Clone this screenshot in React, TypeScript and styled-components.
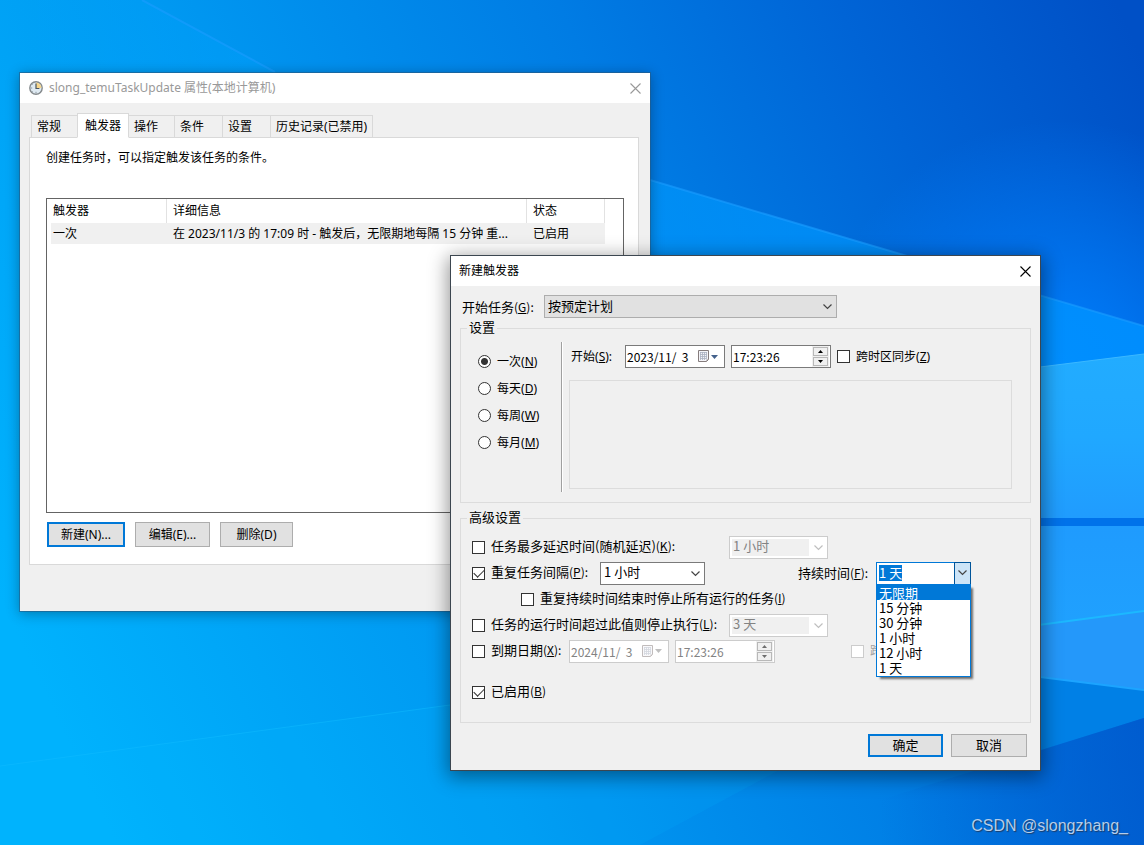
import React, { useEffect, useRef } from "react";
import styled, { createGlobalStyle, css } from "styled-components";

const wideFont = `"Noto Sans", "Noto Sans CJK SC", sans-serif`;
const narrowFont = `"Noto Sans CJK SC", sans-serif`;

const GlobalStyle = createGlobalStyle`
  * { box-sizing: border-box; }
  body { margin: 0; font: 12px/18px ${wideFont}; color: #000; }
  button, input, select { font: inherit; color: inherit; margin: 0; border-radius: 0; }
  u { text-underline-offset: 1px; text-decoration-thickness: 1px; }
`;

/* ---------- desktop ---------- */

const Desktop = styled.main`
  position: relative;
  min-height: 100vh;
  overflow: hidden;
  background: #0094f0;
`;

const Backdrop = styled.svg`
  position: absolute;
  inset: 0;
  width: 100%;
  height: 100%;
`;

const Watermark = styled.span`
  position: absolute;
  right: 16px;
  bottom: 9px;
  font: 16px/20px "Liberation Sans", sans-serif;
  color: #b4cdea;
  text-shadow: 1px 1px 1px #1c3d66;
`;

const Wallpaper = () => (
  <Backdrop viewBox="0 0 1144 845" preserveAspectRatio="none" aria-hidden="true">
    <defs>
      <linearGradient id="base" gradientUnits="userSpaceOnUse" x1="0" y1="600" x2="1144" y2="60">
        <stop offset="0" stopColor="#00b2fd" />
        <stop offset="0.3" stopColor="#009af2" />
        <stop offset="0.6" stopColor="#007ce4" />
        <stop offset="0.8" stopColor="#0064d6" />
        <stop offset="1" stopColor="#0050c6" />
      </linearGradient>
      <radialGradient id="glow" gradientUnits="userSpaceOnUse" cx="1060" cy="360" r="240">
        <stop offset="0" stopColor="#0080ff" stopOpacity="0.95" />
        <stop offset="1" stopColor="#0080ff" stopOpacity="0" />
      </radialGradient>
      <linearGradient id="beam" gradientUnits="userSpaceOnUse" x1="0" y1="0" x2="1144" y2="0">
        <stop offset="0" stopColor="#00a4ff" stopOpacity="0" />
        <stop offset="0.2" stopColor="#00a4ff" stopOpacity="0.3" />
        <stop offset="1" stopColor="#0090ff" stopOpacity="0.9" />
      </linearGradient>
      <linearGradient id="shade" gradientUnits="userSpaceOnUse" x1="880" y1="0" x2="1144" y2="0">
        <stop offset="0" stopColor="#0058cc" stopOpacity="0" />
        <stop offset="1" stopColor="#0058cc" stopOpacity="0.7" />
      </linearGradient>
      <linearGradient id="paneTop" x1="0" y1="0" x2="0" y2="1">
        <stop offset="0" stopColor="#22acff" />
        <stop offset="0.5" stopColor="#20a8ff" />
        <stop offset="1" stopColor="#209cfe" />
      </linearGradient>
      <linearGradient id="paneBottom" x1="0" y1="0" x2="0" y2="1">
        <stop offset="0" stopColor="#1f9bfe" />
        <stop offset="1" stopColor="#20a4fe" />
      </linearGradient>
    </defs>
    <rect width="1144" height="845" fill="url(#base)" />
    <rect width="1144" height="600" fill="url(#glow)" />
    <path d="M0 0H142L275 72L650 180L1144 326V480H0Z" fill="url(#beam)" />
    <path d="M142 0L275 72M650 180L1144 326" stroke="#1a9cff" strokeWidth="2" opacity="0.6" fill="none" />
    <path d="M0 766L450 705H900L640 845H0Z" fill="#00c0ff" opacity="0.12" />
    <path d="M0 766L450 705" stroke="#10bcff" strokeWidth="1" opacity="0.5" />
    <path d="M1000 372L1144 354V518H1000Z" fill="url(#paneTop)" />
    <path d="M1000 372L1144 354" stroke="#3cb8ff" strokeWidth="1" />
    <path d="M1000 518H1144V526H1000Z" fill="#0072ea" />
    <path d="M1000 526H1144V690L1000 672Z" fill="url(#paneBottom)" />
    <path d="M1000 630L1144 611V690L1000 672Z" fill="#2498fa" />
    <path d="M1000 630L1144 611" stroke="#1cb8ff" strokeWidth="2" />
    <path d="M1000 672L1144 690V718L1000 763Z" fill="#0080e6" />
    <path d="M1000 672L1144 690" stroke="#1ca4ff" strokeWidth="2" />
    <path d="M880 800L1144 718V845H880Z" fill="url(#shade)" />
  </Backdrop>
);

/* ---------- window frame ---------- */

const Window = styled.section<{ $x: number; $y: number; $w: number; $active?: boolean }>`
  position: absolute;
  left: ${(p) => p.$x}px;
  top: ${(p) => p.$y}px;
  width: min(${(p) => p.$w}px, calc(100vw - 40px));
  background: #f0f0f0;
  ${(p) =>
    p.$active
      ? css`
          border: 1px solid #3c4650;
          box-shadow: 0 4px 18px 2px rgba(0, 0, 0, 0.42);
        `
      : css`
          box-shadow: 0 0 0 1px rgba(40, 90, 130, 0.6), 0 2px 12px 1px rgba(0, 0, 0, 0.3);
        `}
`;

const TitleBar = styled.header<{ $muted?: boolean }>`
  display: flex;
  align-items: center;
  height: 30px;
  background: #fff;
  color: ${(p) => (p.$muted ? "#999" : "#000")};
`;

const TitleIcon = styled.svg`
  width: 14px;
  height: 14px;
  margin: 0 6px 0 9px;
`;

const TitleText = styled.h1<{ $inset?: boolean }>`
  flex: 1;
  margin: 0;
  padding-left: ${(p) => (p.$inset ? 8 : 0)}px;
  font: inherit;
`;

const CloseButton = styled.button`
  display: grid;
  place-items: center;
  width: 30px;
  height: 28px;
  padding: 0;
  border: 0;
  background: none;
`;

const CloseGlyph = () => (
  <svg width="11" height="11" viewBox="0 0 11 11" stroke="currentColor" strokeWidth="1.1" aria-hidden="true">
    <path d="M0.5 0.5L10.5 10.5M10.5 0.5L0.5 10.5" />
  </svg>
);

const ClockGlyph = () => (
  <TitleIcon viewBox="0 0 14 14" aria-hidden="true">
    <circle cx="7" cy="7" r="6.2" fill="#dfeaf2" stroke="#84898c" strokeWidth="1.4" />
    <path d="M7 7V1.6A5.4 5.4 0 0 1 12.4 7Z" fill="#f7d68c" />
    <path d="M7 2.6V7.5H10.4" fill="none" stroke="#4a5560" strokeWidth="1.2" />
    <path d="M2 7H3.2M7 12V10.8M3.4 3.4L4 4M3.4 10.6L4 10" stroke="#7d8a94" strokeWidth="0.9" />
  </TitleIcon>
);

const PushButton = styled.button<{ $w: number; $primary?: boolean; $tall?: boolean }>`
  width: ${(p) => p.$w}px;
  height: ${(p) => (p.$tall ? 25 : 23)}px;
  padding: 0 0 ${(p) => (p.$tall ? 0 : 2)}px;
  line-height: 18px;
  border: ${(p) => (p.$primary ? "2px solid #0078d7" : "1px solid #adadad")};
  background: #e1e1e1;
`;

/* ---------- properties window ---------- */

const PropsBody = styled.div`
  padding: 10px 11px 46px 9px;
`;

const Tabs = styled.nav`
  display: grid;
  grid-template-columns: 46px 52px 45px 48px 48px 103px;
  align-items: end;
  height: 25px;
  margin: 0 0 -1px 2px;
`;

const Tab = styled.button<{ $selected?: boolean }>`
  position: relative;
  height: 23px;
  padding: 0 0 0 5px;
  border: 1px solid #d9d9d9;
  border-right-width: 0;
  background: #f0f0f0;
  text-align: left;
  white-space: nowrap;
  &:last-child { border-right-width: 1px; }
  ${(p) =>
    p.$selected &&
    css`
      height: 25px;
      padding-left: 7px;
      border-right-width: 1px;
      border-bottom-color: #fff;
      background: #fff;
      & + button { border-left: 0; }
    `}
`;

const TabPanel = styled.div`
  padding: 11px 14px 17px 16px;
  border: 1px solid #d9d9d9;
  background: #fff;
`;

const Hint = styled.p`
  margin: 0 0 31px;
`;

const ListBox = styled.div`
  height: 315px;
  border: 1px solid #646464;
  overflow: hidden;
`;

const TriggerTable = styled.table`
  width: 558px;
  table-layout: fixed;
  border-collapse: separate;
  border-spacing: 0;
  text-align: left;
  white-space: nowrap;
  th, td { padding: 0 0 0 6px; font-weight: normal; overflow: hidden; }
  th { height: 24px; border-right: 1px solid #e2e2e2; }
  td { height: 21px; background: #f0f0f0; }
  td:first-child { background: linear-gradient(to right, #fff 4px, #f0f0f0 4px); }
`;

const ButtonRow = styled.div<{ $end?: boolean }>`
  display: flex;
  justify-content: ${(p) => (p.$end ? "flex-end" : "flex-start")};
  gap: ${(p) => (p.$end ? 8 : 10)}px;
  margin: ${(p) => (p.$end ? "11px 4px 0 0" : "9px 0 0 1px")};
`;

const PropertiesWindow = () => (
  <Window $x={20} $y={73} $w={630}>
    <TitleBar $muted>
      <ClockGlyph />
      <TitleText>slong_temuTaskUpdate 属性(本地计算机)</TitleText>
      <CloseButton aria-label="关闭">
        <CloseGlyph />
      </CloseButton>
    </TitleBar>
    <PropsBody>
      <Tabs>
        <Tab>常规</Tab>
        <Tab $selected>触发器</Tab>
        <Tab>操作</Tab>
        <Tab>条件</Tab>
        <Tab>设置</Tab>
        <Tab>历史记录(已禁用)</Tab>
      </Tabs>
      <TabPanel>
        <Hint>创建任务时，可以指定触发该任务的条件。</Hint>
        <ListBox>
          <TriggerTable>
            <colgroup>
              <col style={{ width: 120 }} />
              <col style={{ width: 360 }} />
              <col />
            </colgroup>
            <thead>
              <tr>
                <th>触发器</th>
                <th>详细信息</th>
                <th>状态</th>
              </tr>
            </thead>
            <tbody>
              <tr>
                <td>一次</td>
                <td>在 2023/11/3 的 17:09 时 - 触发后，无限期地每隔 15 分钟 重...</td>
                <td>已启用</td>
              </tr>
            </tbody>
          </TriggerTable>
        </ListBox>
        <ButtonRow>
          <PushButton $w={78} $tall $primary>新建(N)...</PushButton>
          <PushButton $w={75} $tall>编辑(E)...</PushButton>
          <PushButton $w={73} $tall>删除(D)</PushButton>
        </ButtonRow>
      </TabPanel>
    </PropsBody>
  </Window>
);

/* ---------- form parts ---------- */

const KeyHint = styled.span`
  font-size: 12px;
`;

const Mnemonic = ({ k, colon }: { k: string; colon?: boolean }) => (
  <KeyHint>
    (<u>{k}</u>){colon && ":"}
  </KeyHint>
);

const Check = styled.label<{ $w?: number; $indent?: number; $disabled?: boolean; $small?: boolean }>`
  display: flex;
  align-items: center;
  gap: 6px;
  flex: none;
  width: ${(p) => (p.$w ? `${p.$w}px` : "auto")};
  margin-left: ${(p) => p.$indent ?? 0}px;
  white-space: nowrap;
  color: ${(p) => (p.$disabled ? "#a0a0a0" : "#000")};
  > span { padding-bottom: ${(p) => (p.$small ? 0 : 2)}px; }
  ${(p) => p.$small && `font: 12px/18px ${wideFont};`}
`;

const TickBox = styled.input.attrs({ type: "checkbox" })`
  appearance: none;
  display: grid;
  place-items: center;
  width: 13px;
  height: 13px;
  border: 1px solid #333;
  background: #fff;
  &:disabled { border-color: #ccc; }
  &:checked::after {
    content: "";
    width: 9px;
    height: 5px;
    margin-bottom: 3px;
    border: solid #333;
    border-width: 0 0 1px 1px;
    transform: rotate(-45deg);
  }
`;

const RadioLabel = styled.label`
  display: flex;
  align-items: center;
  gap: 6px;
  height: 27px;
  white-space: nowrap;
`;

const RadioDot = styled.input.attrs({ type: "radio" })`
  appearance: none;
  width: 13px;
  height: 13px;
  border: 1px solid #333;
  border-radius: 50%;
  background: #fff;
  &:checked { background: radial-gradient(circle, #333 3px, #fff 4px); }
`;

const ComboFrame = styled.div<{ $w: number; $tone?: "gray" | "disabled" }>`
  position: relative;
  flex: 0 1 ${(p) => p.$w}px;
  height: 23px;
  border: 1px solid #7a7a7a;
  background: #fff;
  ${(p) => p.$tone === "gray" && "border-color: #adadad; background: #e1e1e1;"}
  ${(p) => p.$tone === "disabled" && "border-color: #ccc; color: #838383;"}
`;

const ComboSelect = styled.select`
  appearance: none;
  display: block;
  width: 100%;
  height: 21px;
  padding: 0 20px 2px 3px;
  border: 0;
  background: none;
  &:disabled {
    opacity: 1;
    background: linear-gradient(#f0f0f0, #f0f0f0) 2px 2px / calc(100% - 20px) 17px no-repeat;
  }
`;

const ComboArrow = styled.svg`
  position: absolute;
  right: 4px;
  top: 8px;
  pointer-events: none;
`;

const ArrowPath = () => <path d="M0.5 0.5L4.5 4.5L8.5 0.5" fill="none" stroke="currentColor" strokeWidth="1.2" />;

const Combo = ({ id, w, value, tone }: { id: string; w: number; value: string; tone?: "gray" | "disabled" }) => (
  <ComboFrame $w={w} $tone={tone}>
    <ComboSelect id={id} aria-label={value} disabled={tone === "disabled"} defaultValue={value}>
      <option>{value}</option>
    </ComboSelect>
    <ComboArrow width="9" height="6" viewBox="0 0 9 6" color={tone === "disabled" ? "#bfbfbf" : "#444"}>
      <ArrowPath />
    </ComboArrow>
  </ComboFrame>
);

const Field = styled.div<{ $disabled?: boolean }>`
  display: flex;
  align-items: center;
  flex: 0 1 100px;
  min-width: 0;
  height: 23px;
  border: 1px solid ${(p) => (p.$disabled ? "#ccc" : "#7a7a7a")};
  background: #fff;
  color: ${(p) => (p.$disabled ? "#838383" : "#000")};
  font: 12px/18px ${narrowFont};
`;

const FieldInput = styled.input`
  flex: 1;
  min-width: 0;
  height: 19px;
  padding: 0 0 0 1px;
  border: 0;
  background: none;
  white-space: pre;
`;

const PickerButton = styled.button`
  display: flex;
  align-items: center;
  gap: 1px;
  padding: 0 6px 0 0;
  border: 0;
  background: none;
`;

const Spinner = styled.span`
  display: grid;
  gap: 1px;
  padding: 1px;
  margin-right: 1px;
  background: #f0f0f0;
`;

const SpinButton = styled.button`
  display: grid;
  place-items: center;
  width: 15px;
  height: 9px;
  padding: 0;
  border: 1px solid #b8b8b8;
  background: #f0f0f0;
`;

const DateField = ({ label, value, disabled }: { label: string; value: string; disabled?: boolean }) => (
  <Field $disabled={disabled}>
    <FieldInput aria-label={label} defaultValue={value} disabled={disabled} />
    <PickerButton type="button" aria-label="选择日期" disabled={disabled}>
      <svg width="12" height="13" viewBox="0 0 12 13" opacity={disabled ? 0.5 : 1}>
        <path d="M0.5 0.5H10.5V9.5L8.5 11.5H0.5Z" fill="#f4f4f8" stroke="#857c7c" />
        <path d="M2 2.5H9M2 4.5H9M2 6.5H9M2 8.5H8M2.5 2V10M4.5 2V10M6.5 2V10M8.5 2V9" stroke="#a9b0bf" strokeWidth="0.8" />
        <path d="M10.5 9.5H8.5V11.5Z" fill="#857c7c" />
      </svg>
      <svg width="7" height="4" viewBox="0 0 7 4">
        <path d="M0 0H7L3.5 4Z" fill={disabled ? "#bfbfbf" : "#44628c"} />
      </svg>
    </PickerButton>
  </Field>
);

const TimeField = ({ label, value, disabled }: { label: string; value: string; disabled?: boolean }) => (
  <Field $disabled={disabled}>
    <FieldInput aria-label={label} defaultValue={value} disabled={disabled} />
    <Spinner>
      <SpinButton type="button" aria-label="增加" disabled={disabled}>
        <svg width="5" height="3" viewBox="0 0 5 3">
          <path d="M0 3H5L2.5 0Z" fill={disabled ? "#6d6d6d" : "#000"} />
        </svg>
      </SpinButton>
      <SpinButton type="button" aria-label="减少" disabled={disabled}>
        <svg width="5" height="3" viewBox="0 0 5 3">
          <path d="M0 0H5L2.5 3Z" fill={disabled ? "#6d6d6d" : "#000"} />
        </svg>
      </SpinButton>
    </Spinner>
  </Field>
);

/* ---------- duration combo box with its open list ---------- */

const DurationBox = styled.div`
  position: relative;
  display: flex;
  width: 95px;
  height: 23px;
  border: 1px solid #0078d7;
  background: #fff;
`;

const DurationInput = styled.input`
  flex: 1;
  min-width: 0;
  height: 16px;
  margin: 2px 0 0 2px;
  padding: 0;
  border: 0;
  outline: 0;
  line-height: 16px;
  &::selection { background: #0078d7; color: #fff; }
`;

const DropButton = styled.button`
  display: grid;
  place-items: center;
  width: 17px;
  margin: -1px;
  padding: 0;
  border: 1px solid #005499;
  background: #cce4f7;
  color: #444;
`;

const OptionList = styled.ul`
  position: absolute;
  z-index: 2;
  top: 21px;
  left: -1px;
  right: -1px;
  margin: 0;
  padding: 0 0 1px;
  border: 1px solid #0078d7;
  background: #fff;
  box-shadow: 3px 3px 2px -1px rgba(0, 0, 0, 0.55);
  list-style: none;
`;

const Option = styled.li`
  height: 15px;
  padding-left: 2px;
  line-height: 15px;
  &[aria-selected="true"] { background: #0078d7; color: #fff; }
`;

const durations = ["无限期", "15 分钟", "30 分钟", "1 小时", "12 小时", "1 天"];

const DurationCombo = () => {
  const input = useRef<HTMLInputElement>(null);
  useEffect(() => {
    input.current?.focus();
    input.current?.select();
  }, []);
  return (
    <DurationBox>
      <DurationInput id="duration" ref={input} role="combobox" aria-expanded="true" aria-controls="duration-list" defaultValue="1 天" />
      <DropButton type="button" aria-label="打开列表">
        <svg width="9" height="6" viewBox="0 0 9 6">
          <ArrowPath />
        </svg>
      </DropButton>
      <OptionList id="duration-list" role="listbox">
        {durations.map((d, i) => (
          <Option key={d} role="option" aria-selected={i === 0}>
            {d}
          </Option>
        ))}
      </OptionList>
    </DurationBox>
  );
};

/* ---------- new trigger dialog ---------- */

const DialogBody = styled.form`
  padding: 9px 9px 13px;
  font: 13px/18px ${narrowFont};
`;

const BeginRow = styled.div`
  display: flex;
  align-items: center;
  margin-bottom: 1px;
  label { width: 84px; padding-left: 2px; }
`;

const Group = styled.fieldset`
  min-width: 0;
  margin: 0 0 6px;
  padding: 0 18px 0 6px;
  border: 1px solid #dcdcdc;
  legend { padding: 0 2px; height: 18px; line-height: 16px; }
  &:last-of-type { margin: 0; }
`;

const Schedule = styled.div`
  display: flex;
  min-height: 165px;
  padding: 5px 0 10px;
  font: 12px/18px ${wideFont};
`;

const RadioColumn = styled.div`
  width: 94px;
  padding: 6px 0 0 11px;
`;

const Divider = styled.div`
  width: 2px;
  margin-right: 6px;
  border-left: 1px solid #a0a0a0;
  border-right: 1px solid #fff;
`;

const ScheduleDetail = styled.div`
  display: flex;
  flex: 1;
  min-width: 0;
  flex-direction: column;
  gap: 12px;
  padding: 3px 0;
`;

const StartRow = styled.div`
  display: flex;
  align-items: center;
  gap: 6px;
  > span { width: 50px; padding-left: 2px; white-space: nowrap; }
`;

const EmptyPanel = styled.div`
  flex: 1;
  border: 1px solid #dcdcdc;
`;

const Advanced = styled.div`
  padding: 7px 0 17px 5px;
`;

const OptionRow = styled.div<{ $spaced?: boolean }>`
  display: flex;
  align-items: center;
  height: 26px;
  margin-top: ${(p) => (p.$spaced ? 15 : 0)}px;
`;

const DurationLabel = styled.label`
  width: 78px;
  margin-left: 93px;
  white-space: nowrap;
`;

const ExpiryFields = styled.div`
  display: flex;
  flex: 0 1 206px;
  gap: 6px;
`;

const periods = [
  ["一次", "N"],
  ["每天", "D"],
  ["每周", "W"],
  ["每月", "M"],
];

const TriggerDialog = () => (
  <Window $x={450} $y={255} $w={591} $active>
    <TitleBar>
      <TitleText $inset>新建触发器</TitleText>
      <CloseButton aria-label="关闭">
        <CloseGlyph />
      </CloseButton>
    </TitleBar>
    <DialogBody onSubmit={(e) => e.preventDefault()}>
      <BeginRow>
        <label htmlFor="begin">开始任务<Mnemonic k="G" colon /></label>
        <Combo id="begin" w={293} value="按预定计划" tone="gray" />
      </BeginRow>
      <Group>
        <legend>设置</legend>
        <Schedule>
          <RadioColumn>
            {periods.map(([name, key], i) => (
              <RadioLabel key={key}>
                <RadioDot name="period" defaultChecked={i === 0} />
                <span>{name}<Mnemonic k={key} /></span>
              </RadioLabel>
            ))}
          </RadioColumn>
          <Divider />
          <ScheduleDetail>
            <StartRow>
              <span>开始<Mnemonic k="S" colon /></span>
              <DateField label="开始日期" value="2023/11/  3" />
              <TimeField label="开始时间" value="17:23:26" />
              <Check $small>
                <TickBox />
                <span>跨时区同步<Mnemonic k="Z" /></span>
              </Check>
            </StartRow>
            <EmptyPanel />
          </ScheduleDetail>
        </Schedule>
      </Group>
      <Group>
        <legend>高级设置</legend>
        <Advanced>
          <OptionRow>
            <Check $w={257}>
              <TickBox />
              <span>任务最多延迟时间(随机延迟)<Mnemonic k="K" colon /></span>
            </Check>
            <Combo id="delay" w={99} value="1 小时" tone="disabled" />
          </OptionRow>
          <OptionRow>
            <Check $w={128}>
              <TickBox defaultChecked />
              <span>重复任务间隔<Mnemonic k="P" colon /></span>
            </Check>
            <Combo id="interval" w={105} value="1 小时" />
            <DurationLabel htmlFor="duration">持续时间<Mnemonic k="F" colon /></DurationLabel>
            <DurationCombo />
          </OptionRow>
          <OptionRow>
            <Check $indent={49}>
              <TickBox />
              <span>重复持续时间结束时停止所有运行的任务<Mnemonic k="I" /></span>
            </Check>
          </OptionRow>
          <OptionRow>
            <Check $w={257}>
              <TickBox />
              <span>任务的运行时间超过此值则停止执行<Mnemonic k="L" colon /></span>
            </Check>
            <Combo id="limit" w={99} value="3 天" tone="disabled" />
          </OptionRow>
          <OptionRow>
            <Check $w={97}>
              <TickBox />
              <span>到期日期<Mnemonic k="X" colon /></span>
            </Check>
            <ExpiryFields>
              <DateField label="到期日期" value="2024/11/  3" disabled />
              <TimeField label="到期时间" value="17:23:26" disabled />
            </ExpiryFields>
            <Check $indent={76} $disabled $small>
              <TickBox disabled />
              <span>跨时区同步<Mnemonic k="E" /></span>
            </Check>
          </OptionRow>
          <OptionRow $spaced>
            <Check>
              <TickBox defaultChecked />
              <span>已启用<Mnemonic k="B" /></span>
            </Check>
          </OptionRow>
        </Advanced>
      </Group>
      <ButtonRow $end>
        <PushButton type="submit" $w={75} $primary>确定</PushButton>
        <PushButton type="button" $w={76}>取消</PushButton>
      </ButtonRow>
    </DialogBody>
  </Window>
);

const App = () => (
  <>
    <GlobalStyle />
    <Desktop>
      <Wallpaper />
      <PropertiesWindow />
      <TriggerDialog />
      <Watermark>CSDN @slongzhang_</Watermark>
    </Desktop>
  </>
);

export default App;
